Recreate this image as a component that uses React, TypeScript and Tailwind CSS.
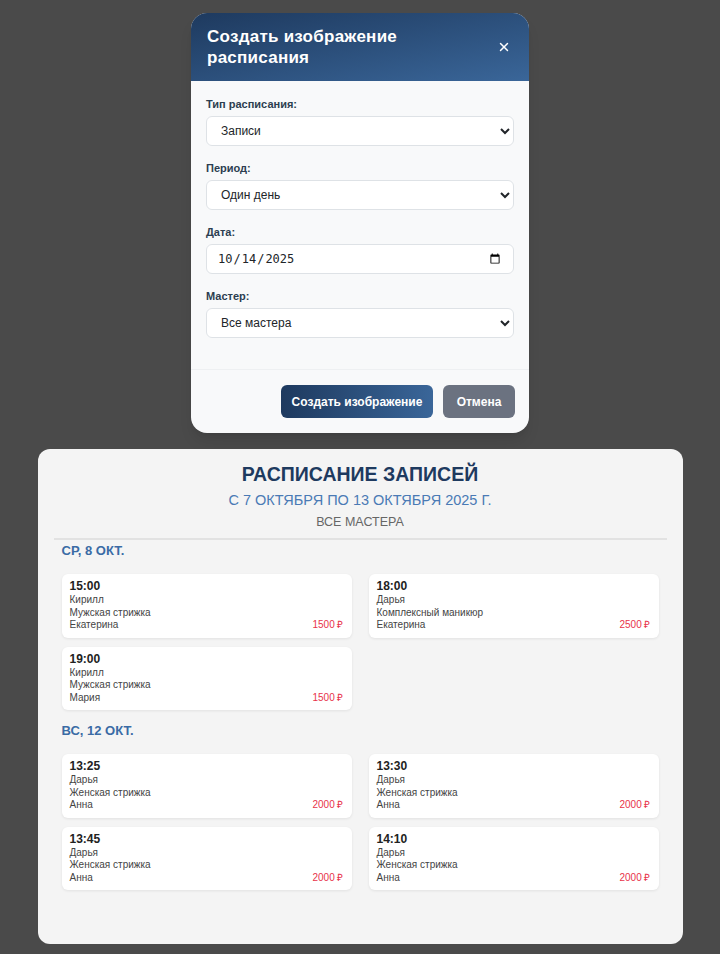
import { X } from "lucide-react"

type Booking = {
  time: string
  client: string
  service: string
  master: string
  price: string
}

const days: { title: string; items: Booking[] }[] = [
  {
    title: "СР, 8 ОКТ.",
    items: [
      { time: "15:00", client: "Кирилл", service: "Мужская стрижка", master: "Екатерина", price: "1500 ₽" },
      { time: "18:00", client: "Дарья", service: "Комплексный маникюр", master: "Екатерина", price: "2500 ₽" },
      { time: "19:00", client: "Кирилл", service: "Мужская стрижка", master: "Мария", price: "1500 ₽" },
    ],
  },
  {
    title: "ВС, 12 ОКТ.",
    items: [
      { time: "13:25", client: "Дарья", service: "Женская стрижка", master: "Анна", price: "2000 ₽" },
      { time: "13:30", client: "Дарья", service: "Женская стрижка", master: "Анна", price: "2000 ₽" },
      { time: "13:45", client: "Дарья", service: "Женская стрижка", master: "Анна", price: "2000 ₽" },
      { time: "14:10", client: "Дарья", service: "Женская стрижка", master: "Анна", price: "2000 ₽" },
    ],
  },
]

function Field({ label, children }: { label: string; children: React.ReactNode }) {
  return (
    <div className="mb-[16px]">
      <label className="block mb-[5px] text-[11px] leading-[13px] font-bold text-[#2c3e50]">{label}</label>
      {children}
    </div>
  )
}

const inputCls =
  "block w-full h-[30px] rounded-[6px] border border-[#dee2e6] bg-white pl-[10px] pr-[4px] text-[12px] text-[#212529] outline-none"

function BookingCard({ b }: { b: Booking }) {
  return (
    <div className="bg-white rounded-[6px] shadow-[0_1px_3px_rgba(0,0,0,0.08)] px-2 pt-[5px] pb-[6px]">
      <div className="text-[12px] leading-[15px] font-bold text-[#222]">{b.time}</div>
      <div className="text-[10px] leading-[12.5px] text-[#444]">{b.client}</div>
      <div className="text-[10px] leading-[12.5px] text-[#444]">{b.service}</div>
      <div className="flex justify-between text-[10px] leading-[12.5px]">
        <span className="text-[#444]">{b.master}</span>
        <span className="text-[#e8334a]">{b.price}</span>
      </div>
    </div>
  )
}

export default function App() {
  return (
    <div className="min-h-[954px] bg-[#4a4a4a] flex flex-col items-center pt-[13px] pb-[11px] font-['Liberation_Sans',Arial,sans-serif]">
      {/* Modal */}
      <div className="w-[338px] rounded-[16px] overflow-hidden bg-[#f8f9fa] shadow-lg">
        <div className="h-[68px] bg-linear-to-br from-[#1e3a5f] to-[#3a6699] flex items-center justify-between pl-[16px] pr-[18px]">
          <h2 className="text-white text-[17px] leading-[21px] font-bold tracking-[0.25px]">
            Создать изображение
            <br />
            расписания
          </h2>
          <X className="w-[14px] h-[14px] text-white" strokeWidth={2.5} />
        </div>
        <div className="px-[15px] pt-[17px] pb-[15px]">
          <Field label="Тип расписания:">
            <select className={inputCls} defaultValue="records">
              <option value="records">Записи</option>
            </select>
          </Field>
          <Field label="Период:">
            <select className={inputCls} defaultValue="day">
              <option value="day">Один день</option>
            </select>
          </Field>
          <Field label="Дата:">
            <input
              type="date"
              defaultValue="2025-10-14"
              className={`${inputCls} pl-[9px] pr-[10px] font-['DejaVu_Sans_Mono',monospace] text-[12px]`}
            />
          </Field>
          <Field label="Мастер:">
            <select className={inputCls} defaultValue="all">
              <option value="all">Все мастера</option>
            </select>
          </Field>
        </div>
        <div className="border-t border-[#eef0f2] px-[14px] py-[15px] flex justify-end gap-[10px]">
          <button className="h-[33px] w-[152px] rounded-[6px] bg-linear-to-r from-[#1e3a5f] to-[#3a6699] text-white text-[12px] font-bold">
            Создать изображение
          </button>
          <button className="h-[33px] w-[72px] rounded-[6px] bg-[#6b7280] text-white text-[12px] font-bold">
            Отмена
          </button>
        </div>
      </div>

      {/* Schedule image */}
      <div className="mt-[16px] w-[645px] min-h-[495px] rounded-[12px] bg-[#f4f4f4] px-4 pt-[12px] pb-[36px]">
        <div className="text-center border-b-2 border-[#e2e2e2] pb-[8px]">
          <div className="text-[19.5px] leading-[26px] font-bold text-[#1e3a5f]">РАСПИСАНИЕ ЗАПИСЕЙ</div>
          <div className="text-[14.5px] leading-[20px] text-[#4a7ab5] mt-[3px]">С 7 ОКТЯБРЯ ПО 13 ОКТЯБРЯ 2025 Г.</div>
          <div className="text-[12.5px] leading-[16px] text-[#666] mt-[4px]">ВСЕ МАСТЕРА</div>
        </div>
        <div className="px-2">
          {days.map((d, i) => (
            <div key={d.title} className={i === 0 ? "pt-[3px]" : "pt-[13px]"}>
              <div className="text-[13px] leading-[16px] font-bold text-[#3a6ba5] mb-[15px]">{d.title}</div>
              <div className="grid grid-cols-2 gap-x-[17px] gap-y-[9px]">
                {d.items.map((b) => (
                  <BookingCard key={b.time} b={b} />
                ))}
              </div>
            </div>
          ))}
        </div>
      </div>
    </div>
  )
}
